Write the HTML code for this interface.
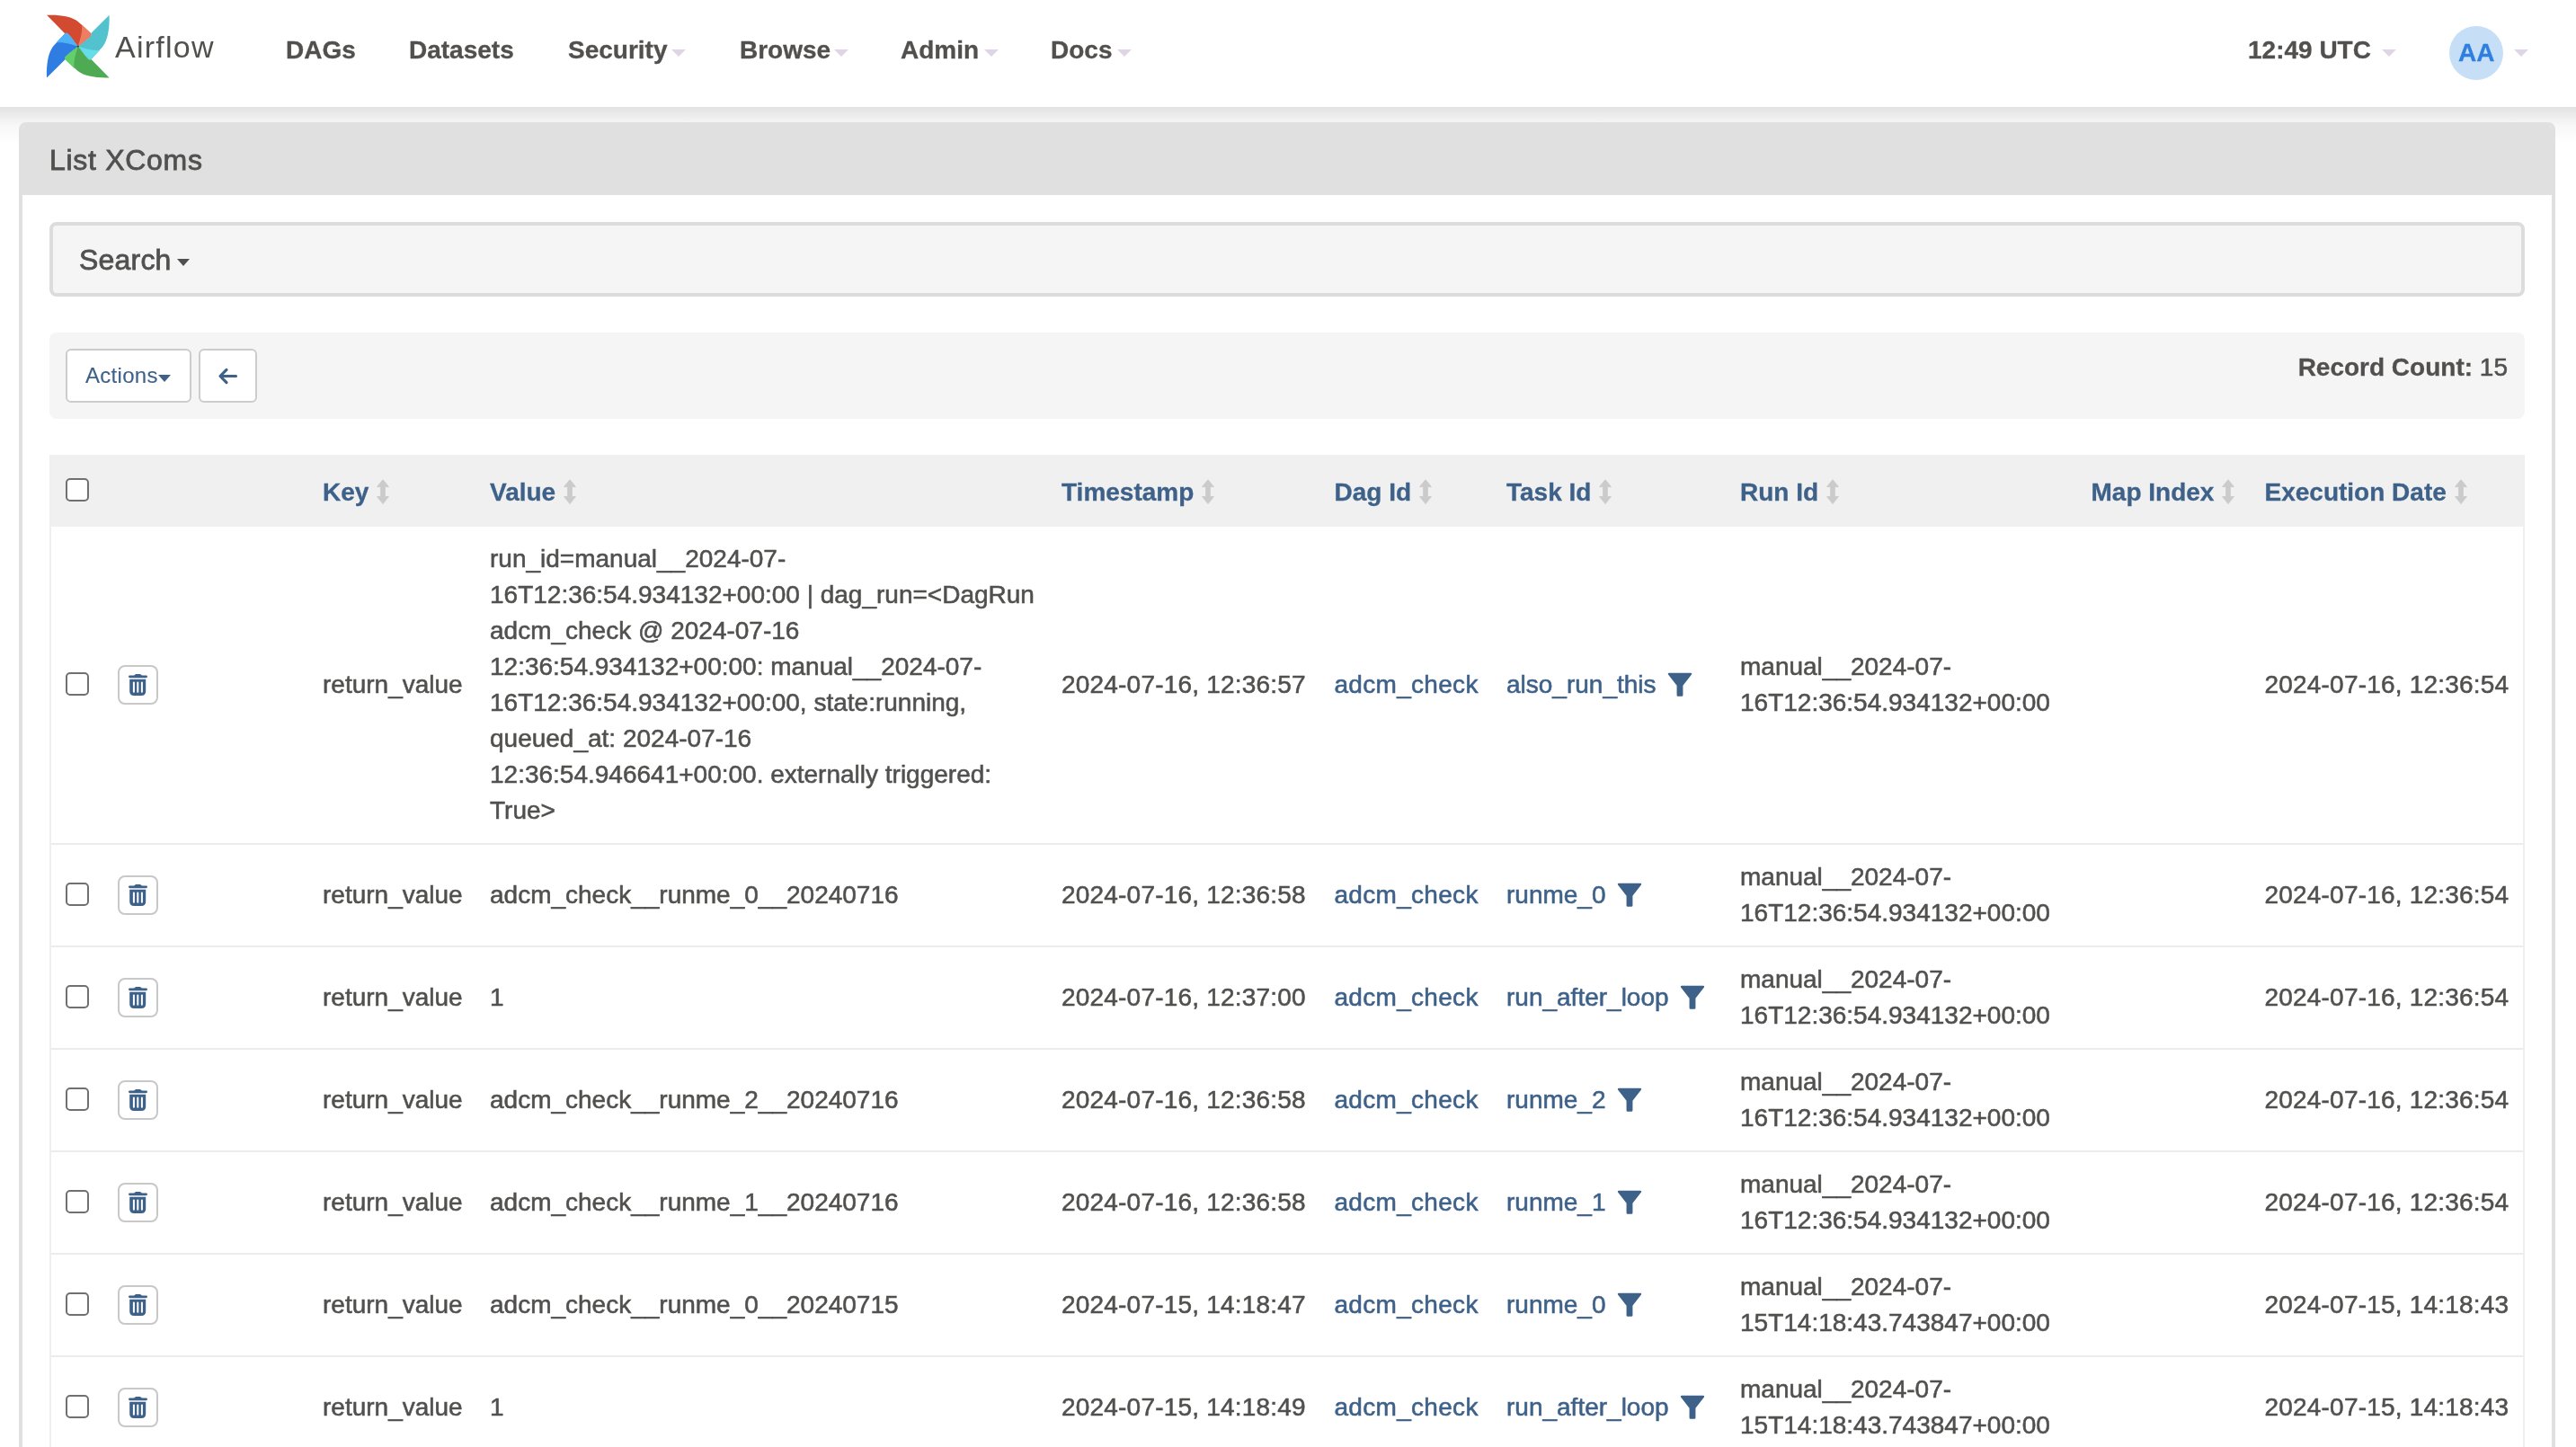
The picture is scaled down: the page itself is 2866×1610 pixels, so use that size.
<!DOCTYPE html>
<html><head><meta charset="utf-8">
<style>
*{box-sizing:border-box;margin:0;padding:0}
html,body{width:2866px;height:1610px;overflow:hidden;background:#fff}
body{font-family:"Liberation Sans",sans-serif;color:#51504f;position:relative;-webkit-text-stroke:0.55px currentColor}
.abs{position:absolute}
#nav{position:absolute;left:0;top:0;width:2866px;height:119px;background:#fff;z-index:2}
#navc{position:absolute;left:0;top:0;width:2866px;height:119px;will-change:transform}
#shadow{position:absolute;left:0;top:119px;width:2866px;height:40px;background:linear-gradient(to bottom,rgba(0,0,0,0.115),rgba(0,0,0,0.03) 50%,rgba(0,0,0,0));z-index:1}
.nt{position:absolute;font-weight:bold;font-size:28px;line-height:32px;top:40px;white-space:nowrap;color:#51504f}
.caret{position:absolute;width:0;height:0;border-left:8px solid transparent;border-right:8px solid transparent;border-top:8px solid #e0d5e6;top:55px}
#panel{position:absolute;left:21px;top:136px;width:2822px;height:1600px;border:4px solid #e0e0e0;border-radius:8px;background:#fff;z-index:3}
#ph{position:absolute;left:0;top:0;width:100%;height:77px;background:#e0e0e0;border-radius:4px 4px 0 0}
#content{position:absolute;left:0;top:0;z-index:4;will-change:transform}
.well{position:absolute;left:55px;top:247px;width:2754px;height:83px;background:#f5f5f5;border:4px solid #dcdcdc;border-radius:8px}
.toolbar{position:absolute;left:55px;top:370px;width:2754px;height:96px;background:#f5f5f5;border-radius:8px}
.btn{position:absolute;top:388px;height:60px;background:#fff;border:2px solid #ccc;border-radius:6px}
#tbl{position:absolute;left:55px;top:506px;width:2754px;border-left:2px solid #efefef;border-right:2px solid #efefef}
table{border-collapse:collapse;table-layout:fixed;width:2750px}
td{padding:16px;vertical-align:middle;font-size:28px;line-height:40px;white-space:nowrap;overflow:visible}
tr.hd{background:#f0f0f0;height:80px}
tr.hd td{padding-top:16px;padding-bottom:16px}
tr.hd .hl,tr.hd .sort{position:relative;top:2px}
tr.hd .cb{position:relative;top:-1px}
tr.rw .cb{position:relative;top:-1px}
tr.rw td{border-top:2px solid #ececec}
tr.hd+tr.rw td{border-top:none}
.hl{font-weight:bold;color:#3e6189}
.lk{color:#3e6189}
.nt,.hl,b{-webkit-text-stroke-width:0.3px}
.dt{letter-spacing:0.2px}
.sort{vertical-align:-4px;margin-left:9px}
.filt{vertical-align:-4px;margin-left:12px;position:relative;top:0px}
.cb{width:26px;height:26px;border:2px solid #707070;border-radius:5px;background:#fff}
.tb{position:relative;width:45px;height:44px;border:2px solid #c8c8c8;border-radius:8px;background:#fff;margin-left:1px;top:0px}
</style></head><body>
<div id="nav"><div id="navc">
  <svg class="abs" style="left:48px;top:12px" width="78" height="78" viewBox="0 0 1447 1447">
<path d="M75 90 C350 80 600 120 730 230 L985 465 Q1012 498 975 532 C880 620 780 680 720 735 C665 675 605 575 517 480 Q483 443 448 468 Z" fill="#d24b30"/><path d="M795 285 L985 465 Q1012 498 975 532 C880 620 780 680 720 735 C760 600 825 420 795 285 Z" fill="#ee7e63"/>
<g transform="rotate(90 720 735)"><path d="M75 90 C350 80 600 120 730 230 L985 465 Q1012 498 975 532 C880 620 780 680 720 735 C665 675 605 575 517 480 Q483 443 448 468 Z" fill="#53c2cf"/><path d="M795 285 L985 465 Q1012 498 975 532 C880 620 780 680 720 735 C760 600 825 420 795 285 Z" fill="#64dce9"/></g>
<g transform="rotate(180 720 735)"><path d="M75 90 C350 80 600 120 730 230 L985 465 Q1012 498 975 532 C880 620 780 680 720 735 C665 675 605 575 517 480 Q483 443 448 468 Z" fill="#4faa54"/><path d="M795 285 L985 465 Q1012 498 975 532 C880 620 780 680 720 735 C760 600 825 420 795 285 Z" fill="#62cf69"/></g>
<g transform="rotate(270 720 735)"><path d="M75 90 C350 80 600 120 730 230 L985 465 Q1012 498 975 532 C880 620 780 680 720 735 C665 675 605 575 517 480 Q483 443 448 468 Z" fill="#2f7de3"/><path d="M795 285 L985 465 Q1012 498 975 532 C880 620 780 680 720 735 C760 600 825 420 795 285 Z" fill="#4db3f6"/></g>
<circle cx="720" cy="735" r="22" fill="#444"/>
</svg>
  <div class="abs" style="left:128px;top:32px;font-size:34px;line-height:40px;color:#51504f;letter-spacing:1.25px;-webkit-text-stroke:0">Airflow</div>
  <div class="nt" style="left:318px">DAGs</div>
  <div class="nt" style="left:455px">Datasets</div>
  <div class="nt" style="left:632px">Security</div><div class="caret" style="left:747px"></div>
  <div class="nt" style="left:823px">Browse</div><div class="caret" style="left:928px"></div>
  <div class="nt" style="left:1002px">Admin</div><div class="caret" style="left:1095px"></div>
  <div class="nt" style="left:1169px">Docs</div><div class="caret" style="left:1243px"></div>
  <div class="nt" style="left:2501px">12:49 UTC</div><div class="caret" style="left:2650px"></div>
  <div class="abs" style="left:2725px;top:29px;width:60px;height:60px;border-radius:50%;background:#c6dff7"></div>
  <div class="nt" style="left:2735px;top:43px;color:#2f7fe0">AA</div>
  <div class="caret" style="left:2797px"></div>
</div></div>
<div id="shadow"></div>
<div id="panel"><div id="ph"></div></div>
<div id="content">
  <div class="abs" style="left:55px;top:158px;font-size:32px;line-height:40px;letter-spacing:0.7px;-webkit-text-stroke:0.8px currentColor;white-space:nowrap">List XComs</div>
  <div class="well"></div>
  <div class="abs" style="left:88px;top:269px;font-size:32px;line-height:40px;letter-spacing:0.2px;-webkit-text-stroke:0.8px currentColor;white-space:nowrap">Search</div>
  <div class="abs" style="left:197px;top:288px;width:0;height:0;border-left:7.5px solid transparent;border-right:7.5px solid transparent;border-top:8px solid #51504f"></div>
  <div class="toolbar"></div>
  <div class="btn" style="left:73px;width:140px"></div>
  <div class="abs" style="left:95px;top:401px;font-size:24px;line-height:34px;color:#3e6189;white-space:nowrap;-webkit-text-stroke:0.1px currentColor;letter-spacing:0.3px">Actions</div>
  <div class="abs" style="left:176px;top:417px;width:0;height:0;border-left:7.5px solid transparent;border-right:7.5px solid transparent;border-top:8px solid #3e6189"></div>
  <div class="btn" style="left:221px;width:65px"></div>
  <svg class="abs" style="left:241.6px;top:407.5px" width="25" height="22" viewBox="0 0 25 22"><path d="M10 3.4 L3 10.5 L10 17.6 M3.5 10.5 H20.5" fill="none" stroke="#3e6189" stroke-width="3.2" stroke-linecap="round" stroke-linejoin="round"/></svg>
    <div class="abs" style="left:290px;width:2500px;text-align:right;top:392px;font-size:28px;line-height:34px;white-space:nowrap"><b>Record Count:</b> 15</div>
  <div id="tbl"><table><colgroup><col style="width:57px"><col style="width:229px"><col style="width:186px"><col style="width:636px"><col style="width:303.5px"><col style="width:191.5px"><col style="width:260px"><col style="width:390.5px"><col style="width:193px"><col style="width:303.5px"></colgroup><tr class="hd"><td><div class="cb"></div></td><td></td><td><span class="hl">Key</span><svg class="sort" width="14" height="28" viewBox="0 0 14 28"><path d="M7 0.8 L13.4 8.6 L9.3 8.6 L9.3 19.6 L13.4 19.6 L7 27.6 L0.6 19.6 L4.7 19.6 L4.7 8.6 L0.6 8.6 Z" fill="#cbcbcb" stroke="#cbcbcb" stroke-width="0.9" stroke-linejoin="round"/></svg></td><td><span class="hl">Value</span><svg class="sort" width="14" height="28" viewBox="0 0 14 28"><path d="M7 0.8 L13.4 8.6 L9.3 8.6 L9.3 19.6 L13.4 19.6 L7 27.6 L0.6 19.6 L4.7 19.6 L4.7 8.6 L0.6 8.6 Z" fill="#cbcbcb" stroke="#cbcbcb" stroke-width="0.9" stroke-linejoin="round"/></svg></td><td><span class="hl">Timestamp</span><svg class="sort" width="14" height="28" viewBox="0 0 14 28"><path d="M7 0.8 L13.4 8.6 L9.3 8.6 L9.3 19.6 L13.4 19.6 L7 27.6 L0.6 19.6 L4.7 19.6 L4.7 8.6 L0.6 8.6 Z" fill="#cbcbcb" stroke="#cbcbcb" stroke-width="0.9" stroke-linejoin="round"/></svg></td><td><span class="hl">Dag Id</span><svg class="sort" width="14" height="28" viewBox="0 0 14 28"><path d="M7 0.8 L13.4 8.6 L9.3 8.6 L9.3 19.6 L13.4 19.6 L7 27.6 L0.6 19.6 L4.7 19.6 L4.7 8.6 L0.6 8.6 Z" fill="#cbcbcb" stroke="#cbcbcb" stroke-width="0.9" stroke-linejoin="round"/></svg></td><td><span class="hl">Task Id</span><svg class="sort" width="14" height="28" viewBox="0 0 14 28"><path d="M7 0.8 L13.4 8.6 L9.3 8.6 L9.3 19.6 L13.4 19.6 L7 27.6 L0.6 19.6 L4.7 19.6 L4.7 8.6 L0.6 8.6 Z" fill="#cbcbcb" stroke="#cbcbcb" stroke-width="0.9" stroke-linejoin="round"/></svg></td><td><span class="hl">Run Id</span><svg class="sort" width="14" height="28" viewBox="0 0 14 28"><path d="M7 0.8 L13.4 8.6 L9.3 8.6 L9.3 19.6 L13.4 19.6 L7 27.6 L0.6 19.6 L4.7 19.6 L4.7 8.6 L0.6 8.6 Z" fill="#cbcbcb" stroke="#cbcbcb" stroke-width="0.9" stroke-linejoin="round"/></svg></td><td><span class="hl">Map Index</span><svg class="sort" width="14" height="28" viewBox="0 0 14 28"><path d="M7 0.8 L13.4 8.6 L9.3 8.6 L9.3 19.6 L13.4 19.6 L7 27.6 L0.6 19.6 L4.7 19.6 L4.7 8.6 L0.6 8.6 Z" fill="#cbcbcb" stroke="#cbcbcb" stroke-width="0.9" stroke-linejoin="round"/></svg></td><td><span class="hl">Execution Date</span><svg class="sort" width="14" height="28" viewBox="0 0 14 28"><path d="M7 0.8 L13.4 8.6 L9.3 8.6 L9.3 19.6 L13.4 19.6 L7 27.6 L0.6 19.6 L4.7 19.6 L4.7 8.6 L0.6 8.6 Z" fill="#cbcbcb" stroke="#cbcbcb" stroke-width="0.9" stroke-linejoin="round"/></svg></td></tr><tr class="rw"><td><div class="cb"></div></td><td><div class="tb"><svg class="abs" style="left:10px;top:8px" width="21" height="24" viewBox="0 0 21 24">
<path d="M6 2 L7.2 0.4 Q7.6 0 8.4 0 H12.6 Q13.4 0 13.8 0.4 L15 2 Z" fill="#3e6189"/>
<rect x="0" y="1.4" width="21" height="2.8" rx="1.4" fill="#3e6189"/>
<path d="M1.2 5.8 H19.2 V19 Q19.2 24 14.2 24 H6.2 Q1.2 24 1.2 19 Z" fill="#3e6189"/>
<rect x="4.9" y="8.6" width="2" height="12.2" rx="1" fill="#fff"/>
<rect x="9.3" y="8.6" width="2" height="12.2" rx="1" fill="#fff"/>
<rect x="13.9" y="8.6" width="2" height="12.2" rx="1" fill="#fff"/>
</svg></div></td><td>return_value</td><td>run_id=manual__2024-07-<br>16T12:36:54.934132+00:00 | dag_run=&lt;DagRun<br>adcm_check @ 2024-07-16<br>12:36:54.934132+00:00: manual__2024-07-<br>16T12:36:54.934132+00:00, state:running,<br>queued_at: 2024-07-16<br>12:36:54.946641+00:00. externally triggered:<br>True&gt;</td><td class="dt">2024-07-16, 12:36:57</td><td><span class="lk" style="letter-spacing:0.3px">adcm_check</span></td><td><span class="lk">also_run_this</span><svg class="filt" width="28" height="27" viewBox="0 0 27 27" preserveAspectRatio="none"><path d="M1.8 0.8 H25.2 Q26.8 0.8 26 2.6 L16.8 14.8 V25.6 Q16.8 26.8 15.6 26.8 H11.4 Q10.2 26.8 10.2 25.6 V14.8 L1 2.6 Q0.2 0.8 1.8 0.8 Z" fill="#3e6189"/></svg></td><td>manual__2024-07-<br>16T12:36:54.934132+00:00</td><td></td><td class="dt">2024-07-16, 12:36:54</td></tr>
<tr class="rw"><td><div class="cb"></div></td><td><div class="tb"><svg class="abs" style="left:10px;top:8px" width="21" height="24" viewBox="0 0 21 24">
<path d="M6 2 L7.2 0.4 Q7.6 0 8.4 0 H12.6 Q13.4 0 13.8 0.4 L15 2 Z" fill="#3e6189"/>
<rect x="0" y="1.4" width="21" height="2.8" rx="1.4" fill="#3e6189"/>
<path d="M1.2 5.8 H19.2 V19 Q19.2 24 14.2 24 H6.2 Q1.2 24 1.2 19 Z" fill="#3e6189"/>
<rect x="4.9" y="8.6" width="2" height="12.2" rx="1" fill="#fff"/>
<rect x="9.3" y="8.6" width="2" height="12.2" rx="1" fill="#fff"/>
<rect x="13.9" y="8.6" width="2" height="12.2" rx="1" fill="#fff"/>
</svg></div></td><td>return_value</td><td>adcm_check__runme_0__20240716</td><td class="dt">2024-07-16, 12:36:58</td><td><span class="lk" style="letter-spacing:0.3px">adcm_check</span></td><td><span class="lk">runme_0</span><svg class="filt" width="28" height="27" viewBox="0 0 27 27" preserveAspectRatio="none"><path d="M1.8 0.8 H25.2 Q26.8 0.8 26 2.6 L16.8 14.8 V25.6 Q16.8 26.8 15.6 26.8 H11.4 Q10.2 26.8 10.2 25.6 V14.8 L1 2.6 Q0.2 0.8 1.8 0.8 Z" fill="#3e6189"/></svg></td><td>manual__2024-07-<br>16T12:36:54.934132+00:00</td><td></td><td class="dt">2024-07-16, 12:36:54</td></tr>
<tr class="rw"><td><div class="cb"></div></td><td><div class="tb"><svg class="abs" style="left:10px;top:8px" width="21" height="24" viewBox="0 0 21 24">
<path d="M6 2 L7.2 0.4 Q7.6 0 8.4 0 H12.6 Q13.4 0 13.8 0.4 L15 2 Z" fill="#3e6189"/>
<rect x="0" y="1.4" width="21" height="2.8" rx="1.4" fill="#3e6189"/>
<path d="M1.2 5.8 H19.2 V19 Q19.2 24 14.2 24 H6.2 Q1.2 24 1.2 19 Z" fill="#3e6189"/>
<rect x="4.9" y="8.6" width="2" height="12.2" rx="1" fill="#fff"/>
<rect x="9.3" y="8.6" width="2" height="12.2" rx="1" fill="#fff"/>
<rect x="13.9" y="8.6" width="2" height="12.2" rx="1" fill="#fff"/>
</svg></div></td><td>return_value</td><td>1</td><td class="dt">2024-07-16, 12:37:00</td><td><span class="lk" style="letter-spacing:0.3px">adcm_check</span></td><td><span class="lk">run_after_loop</span><svg class="filt" width="28" height="27" viewBox="0 0 27 27" preserveAspectRatio="none"><path d="M1.8 0.8 H25.2 Q26.8 0.8 26 2.6 L16.8 14.8 V25.6 Q16.8 26.8 15.6 26.8 H11.4 Q10.2 26.8 10.2 25.6 V14.8 L1 2.6 Q0.2 0.8 1.8 0.8 Z" fill="#3e6189"/></svg></td><td>manual__2024-07-<br>16T12:36:54.934132+00:00</td><td></td><td class="dt">2024-07-16, 12:36:54</td></tr>
<tr class="rw"><td><div class="cb"></div></td><td><div class="tb"><svg class="abs" style="left:10px;top:8px" width="21" height="24" viewBox="0 0 21 24">
<path d="M6 2 L7.2 0.4 Q7.6 0 8.4 0 H12.6 Q13.4 0 13.8 0.4 L15 2 Z" fill="#3e6189"/>
<rect x="0" y="1.4" width="21" height="2.8" rx="1.4" fill="#3e6189"/>
<path d="M1.2 5.8 H19.2 V19 Q19.2 24 14.2 24 H6.2 Q1.2 24 1.2 19 Z" fill="#3e6189"/>
<rect x="4.9" y="8.6" width="2" height="12.2" rx="1" fill="#fff"/>
<rect x="9.3" y="8.6" width="2" height="12.2" rx="1" fill="#fff"/>
<rect x="13.9" y="8.6" width="2" height="12.2" rx="1" fill="#fff"/>
</svg></div></td><td>return_value</td><td>adcm_check__runme_2__20240716</td><td class="dt">2024-07-16, 12:36:58</td><td><span class="lk" style="letter-spacing:0.3px">adcm_check</span></td><td><span class="lk">runme_2</span><svg class="filt" width="28" height="27" viewBox="0 0 27 27" preserveAspectRatio="none"><path d="M1.8 0.8 H25.2 Q26.8 0.8 26 2.6 L16.8 14.8 V25.6 Q16.8 26.8 15.6 26.8 H11.4 Q10.2 26.8 10.2 25.6 V14.8 L1 2.6 Q0.2 0.8 1.8 0.8 Z" fill="#3e6189"/></svg></td><td>manual__2024-07-<br>16T12:36:54.934132+00:00</td><td></td><td class="dt">2024-07-16, 12:36:54</td></tr>
<tr class="rw"><td><div class="cb"></div></td><td><div class="tb"><svg class="abs" style="left:10px;top:8px" width="21" height="24" viewBox="0 0 21 24">
<path d="M6 2 L7.2 0.4 Q7.6 0 8.4 0 H12.6 Q13.4 0 13.8 0.4 L15 2 Z" fill="#3e6189"/>
<rect x="0" y="1.4" width="21" height="2.8" rx="1.4" fill="#3e6189"/>
<path d="M1.2 5.8 H19.2 V19 Q19.2 24 14.2 24 H6.2 Q1.2 24 1.2 19 Z" fill="#3e6189"/>
<rect x="4.9" y="8.6" width="2" height="12.2" rx="1" fill="#fff"/>
<rect x="9.3" y="8.6" width="2" height="12.2" rx="1" fill="#fff"/>
<rect x="13.9" y="8.6" width="2" height="12.2" rx="1" fill="#fff"/>
</svg></div></td><td>return_value</td><td>adcm_check__runme_1__20240716</td><td class="dt">2024-07-16, 12:36:58</td><td><span class="lk" style="letter-spacing:0.3px">adcm_check</span></td><td><span class="lk">runme_1</span><svg class="filt" width="28" height="27" viewBox="0 0 27 27" preserveAspectRatio="none"><path d="M1.8 0.8 H25.2 Q26.8 0.8 26 2.6 L16.8 14.8 V25.6 Q16.8 26.8 15.6 26.8 H11.4 Q10.2 26.8 10.2 25.6 V14.8 L1 2.6 Q0.2 0.8 1.8 0.8 Z" fill="#3e6189"/></svg></td><td>manual__2024-07-<br>16T12:36:54.934132+00:00</td><td></td><td class="dt">2024-07-16, 12:36:54</td></tr>
<tr class="rw"><td><div class="cb"></div></td><td><div class="tb"><svg class="abs" style="left:10px;top:8px" width="21" height="24" viewBox="0 0 21 24">
<path d="M6 2 L7.2 0.4 Q7.6 0 8.4 0 H12.6 Q13.4 0 13.8 0.4 L15 2 Z" fill="#3e6189"/>
<rect x="0" y="1.4" width="21" height="2.8" rx="1.4" fill="#3e6189"/>
<path d="M1.2 5.8 H19.2 V19 Q19.2 24 14.2 24 H6.2 Q1.2 24 1.2 19 Z" fill="#3e6189"/>
<rect x="4.9" y="8.6" width="2" height="12.2" rx="1" fill="#fff"/>
<rect x="9.3" y="8.6" width="2" height="12.2" rx="1" fill="#fff"/>
<rect x="13.9" y="8.6" width="2" height="12.2" rx="1" fill="#fff"/>
</svg></div></td><td>return_value</td><td>adcm_check__runme_0__20240715</td><td class="dt">2024-07-15, 14:18:47</td><td><span class="lk" style="letter-spacing:0.3px">adcm_check</span></td><td><span class="lk">runme_0</span><svg class="filt" width="28" height="27" viewBox="0 0 27 27" preserveAspectRatio="none"><path d="M1.8 0.8 H25.2 Q26.8 0.8 26 2.6 L16.8 14.8 V25.6 Q16.8 26.8 15.6 26.8 H11.4 Q10.2 26.8 10.2 25.6 V14.8 L1 2.6 Q0.2 0.8 1.8 0.8 Z" fill="#3e6189"/></svg></td><td>manual__2024-07-<br>15T14:18:43.743847+00:00</td><td></td><td class="dt">2024-07-15, 14:18:43</td></tr>
<tr class="rw"><td><div class="cb"></div></td><td><div class="tb"><svg class="abs" style="left:10px;top:8px" width="21" height="24" viewBox="0 0 21 24">
<path d="M6 2 L7.2 0.4 Q7.6 0 8.4 0 H12.6 Q13.4 0 13.8 0.4 L15 2 Z" fill="#3e6189"/>
<rect x="0" y="1.4" width="21" height="2.8" rx="1.4" fill="#3e6189"/>
<path d="M1.2 5.8 H19.2 V19 Q19.2 24 14.2 24 H6.2 Q1.2 24 1.2 19 Z" fill="#3e6189"/>
<rect x="4.9" y="8.6" width="2" height="12.2" rx="1" fill="#fff"/>
<rect x="9.3" y="8.6" width="2" height="12.2" rx="1" fill="#fff"/>
<rect x="13.9" y="8.6" width="2" height="12.2" rx="1" fill="#fff"/>
</svg></div></td><td>return_value</td><td>1</td><td class="dt">2024-07-15, 14:18:49</td><td><span class="lk" style="letter-spacing:0.3px">adcm_check</span></td><td><span class="lk">run_after_loop</span><svg class="filt" width="28" height="27" viewBox="0 0 27 27" preserveAspectRatio="none"><path d="M1.8 0.8 H25.2 Q26.8 0.8 26 2.6 L16.8 14.8 V25.6 Q16.8 26.8 15.6 26.8 H11.4 Q10.2 26.8 10.2 25.6 V14.8 L1 2.6 Q0.2 0.8 1.8 0.8 Z" fill="#3e6189"/></svg></td><td>manual__2024-07-<br>15T14:18:43.743847+00:00</td><td></td><td class="dt">2024-07-15, 14:18:43</td></tr>
</table></div>
</div>
</body></html>
